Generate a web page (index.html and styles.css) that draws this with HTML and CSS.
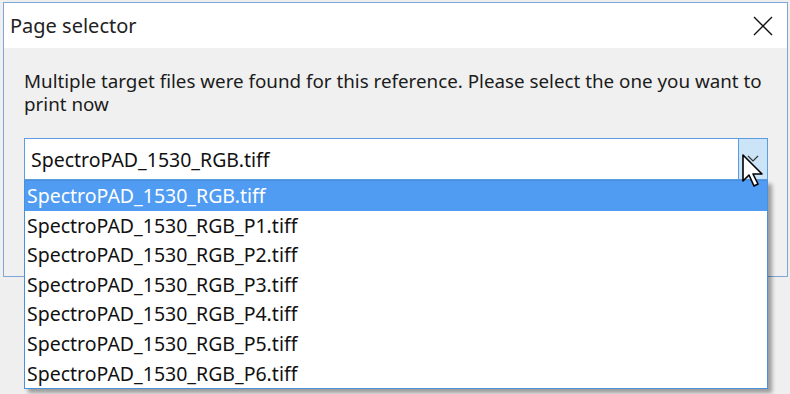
FILE: index.html
```html
<!DOCTYPE html>
<html lang="en">
<head>
  <meta charset="UTF-8">
  <title>Page selector</title>
  <link rel="stylesheet" href="styles.css">
</head>
<body>
  <div class="dialog">
    <div class="titlebar">
      <span class="title">Page selector</span>
      <svg class="close" width="20" height="20" viewBox="0 0 20 20">
        <path d="M1 1 L19 19 M19 1 L1 19" stroke="#111" stroke-width="1.4" fill="none"/>
      </svg>
    </div>
    <div class="content">
      <p class="message">Multiple target files were found for this reference. Please select the one you want to print now</p>
      <div class="combo">
        <div class="combo-value">SpectroPAD_1530_RGB.tiff</div>
        <div class="combo-btn">
          <svg width="12" height="8" viewBox="0 0 12 8">
            <path d="M1 1 L6 6 L11 1" stroke="#333" stroke-width="1.2" fill="none"/>
          </svg>
        </div>
        <ul class="options">
          <li class="selected">SpectroPAD_1530_RGB.tiff</li>
          <li>SpectroPAD_1530_RGB_P1.tiff</li>
          <li>SpectroPAD_1530_RGB_P2.tiff</li>
          <li>SpectroPAD_1530_RGB_P3.tiff</li>
          <li>SpectroPAD_1530_RGB_P4.tiff</li>
          <li>SpectroPAD_1530_RGB_P5.tiff</li>
          <li>SpectroPAD_1530_RGB_P6.tiff</li>
        </ul>
        <!-- mouse pointer over the drop button -->
        <svg class="pointer" width="24" height="36" viewBox="0 0 24 36">
          <path d="M2 2 L2 28 L8 22 L13 33 L17 31 L12 21 L21 21 Z" fill="#fff" stroke="#000" stroke-width="1.6" stroke-linejoin="round"/>
        </svg>
      </div>
    </div>
  </div>
</body>
</html>
```

FILE: styles.css
```css
html, body {
  height: 394px;
}
body {
  margin: 0;
  background-color: #efefef;
  font-family: "Noto Sans", "Open Sans", sans-serif;
  color: #1b1b1b;
  overflow: hidden;
}
.dialog {
  margin: 2px 0 0 3px;
  width: 783px;
  height: 273px;
  border: 1px solid #7ea6d6;
  background-color: #f0f0f0;
}
.titlebar {
  height: 45px;
  background-color: #ffffff;
  display: flex;
  align-items: center;
  justify-content: space-between;
  padding: 0 14px 0 6px;
}
.title {
  font-size: 20px;
  color: #222;
}
.close {
  display: block;
}
.content {
  padding: 22px 20px 0 20px;
}
.message {
  margin: 0;
  font-size: 18.8px;
  line-height: 23px;
}
.combo {
  position: relative;
  margin-top: 22px;
  width: 742px;
  height: 40px;
  border: 1px solid #5c9ce0;
  background-color: #ffffff;
  display: flex;
}
.combo-value {
  flex: 1;
  display: flex;
  align-items: center;
  padding-left: 6px;
  font-size: 19.5px;
  color: #111;
}
.combo-btn {
  width: 28px;
  background-color: #cce4f7;
  border-left: 1px solid #569de5;
  display: flex;
  align-items: center;
  justify-content: center;
}
.options {
  position: absolute;
  top: 41px;
  left: -1px;
  width: 742px;
  margin: 0;
  padding: 0;
  list-style: none;
  background-color: #ffffff;
  border: 1px solid #4a90dc;
  box-shadow: 4px 4px 4px rgba(0, 0, 0, 0.35);
}
.options li {
  height: 29.6px;
  line-height: 29.6px;
  padding-left: 2px;
  font-size: 19.5px;
  color: #111;
}
.options li.selected {
  background-color: #4f9cf2;
  color: #ffffff;
}
.pointer {
  position: absolute;
  right: 2px;
  top: 14px;
}
```
